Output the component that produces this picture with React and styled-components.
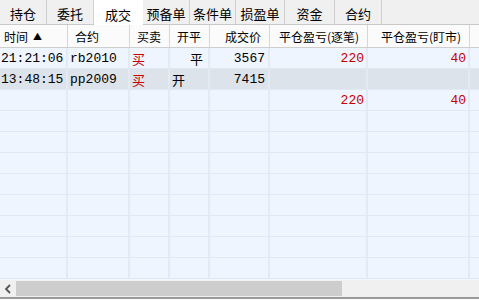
import styled, { createGlobalStyle } from 'styled-components';

const GlobalStyle = createGlobalStyle`
    html, body {
        margin: 0;
        padding: 0;
        background: #ffffff;
    }
    body {
        font-family: "Noto Sans CJK SC", "Liberation Sans", sans-serif;
    }
`

const COLS = '68px 62px 40px 40px 60px 98px 102px 60px';

const Panel = styled.div`
    width: 479px;
    height: 299px;
    overflow: hidden;
    display: flex;
    flex-direction: column;
    border-bottom: 2px solid #9a9a9a;
    box-sizing: border-box;
`

const TabBar = styled.div`
    display: flex;
    height: 25px;
    background: #f0f0f0;
    border-bottom: 1px solid #c9c9c9;
    box-sizing: border-box;
    flex-shrink: 0;
`

const Tab = styled.div`
    width: ${props => props.w}px;
    display: flex;
    align-items: center;
    justify-content: center;
    padding-top: 3px;
    box-sizing: border-box;
    font-size: 13px;
    color: #000;
    background: ${props => props.active ? '#ffffff' : 'transparent'};
    border-right: 1px solid ${props => props.active ? '#ffffff' : '#cfcfcf'};
    margin-bottom: ${props => props.active ? '-1px' : '0'};
`

const Header = styled.div`
    display: grid;
    grid-template-columns: ${COLS};
    height: 23px;
    background: #fbfbfb;
    border-bottom: 1px solid #cfcfcf;
    box-sizing: border-box;
    flex-shrink: 0;
`

const HeadCell = styled.div`
    display: flex;
    align-items: center;
    justify-content: ${props => props.right ? 'flex-end' : 'flex-start'};
    padding: ${props => props.right ? '0 8px 0 0' : `0 0 0 ${props.pad ?? 7}px`};
    font-size: 12px;
    color: #000;
    border-right: 1px solid #d6d6d6;
    white-space: nowrap;
    overflow: hidden;
`

const Arrow = styled.span`
    font-size: 9px;
    margin-left: 5px;
`

const Body = styled.div`
    flex: 1;
    background: #f0f6ff;
    overflow: hidden;
`

const Row = styled.div`
    display: grid;
    grid-template-columns: ${COLS};
    height: 21px;
    background: ${props => props.selected ? '#dde3ea' : '#eff5fe'};
    border-bottom: 1px solid #e2e8f1;
    box-sizing: border-box;
`

const Cell = styled.div`
    display: flex;
    align-items: center;
    justify-content: ${props => props.right ? 'flex-end' : 'flex-start'};
    padding: ${props => props.right ? `0 ${props.pad ?? 2}px 0 0` : `0 0 0 ${props.pad ?? 2}px`};
    font-family: "Liberation Mono", "Noto Sans CJK SC", monospace;
    font-size: 13px;
    color: ${props => props.red ? '#c40000' : '#000'};
    border-right: 2px solid #e4eaf3;
    white-space: nowrap;
    overflow: hidden;
`

const ScrollBar = styled.div`
    display: flex;
    height: 17px;
    background: #f0f0f0;
    flex-shrink: 0;
`

const ScrollButton = styled.div`
    width: 16px;
    display: flex;
    align-items: center;
    justify-content: center;
`

const Thumb = styled.div`
    width: 326px;
    margin: 1px 0;
    background: #cdcdcd;
`

const tabs = [
    { label: '持仓', w: 47 },
    { label: '委托', w: 47 },
    { label: '成交', w: 49, active: true },
    { label: '预备单', w: 47 },
    { label: '条件单', w: 46 },
    { label: '损盈单', w: 49 },
    { label: '资金', w: 50 },
    { label: '合约', w: 47 },
];

const trades = [
    { time: '21:21:06', code: 'rb2010', side: '买', oc: '平', ocPad: 20, price: '3567', pnl1: '220', pnl2: '40' },
    { time: '13:48:15', code: 'pp2009', side: '买', oc: '开', ocPad: 2, price: '7415', pnl1: '', pnl2: '', selected: true },
    { time: '', code: '', side: '', oc: '', price: '', pnl1: '220', pnl2: '40' },
];

const EMPTY_ROWS = 8;

const App = () => {
    return (
        <>
            <GlobalStyle />
            <Panel>
                <TabBar>
                    {tabs.map(t => (
                        <Tab key={t.label} w={t.w} active={t.active}>{t.label}</Tab>
                    ))}
                </TabBar>

                <Header>
                    <HeadCell pad={4}>时间<Arrow>▲</Arrow></HeadCell>
                    <HeadCell>合约</HeadCell>
                    <HeadCell>买卖</HeadCell>
                    <HeadCell>开平</HeadCell>
                    <HeadCell right>成交价</HeadCell>
                    <HeadCell right>平仓盈亏(逐笔)</HeadCell>
                    <HeadCell right>平仓盈亏(盯市)</HeadCell>
                    <HeadCell />
                </Header>

                <Body>
                    {trades.map((r, i) => (
                        <Row key={i} selected={r.selected}>
                            <Cell pad={1}>{r.time}</Cell>
                            <Cell>{r.code}</Cell>
                            <Cell red>{r.side}</Cell>
                            <Cell pad={r.ocPad}>{r.oc}</Cell>
                            <Cell right pad={3}>{r.price}</Cell>
                            <Cell right red>{r.pnl1}</Cell>
                            <Cell right red>{r.pnl2}</Cell>
                            <Cell />
                        </Row>
                    ))}
                    {Array.from({ length: EMPTY_ROWS }).map((_, i) => (
                        <Row key={'e' + i}>
                            <Cell /><Cell /><Cell /><Cell /><Cell /><Cell /><Cell /><Cell />
                        </Row>
                    ))}
                </Body>

                <ScrollBar>
                    <ScrollButton>
                        <svg width="8" height="10" viewBox="0 0 8 10">
                            <path d="M6 1 L2 5 L6 9" fill="none" stroke="#555" strokeWidth="1.8" />
                        </svg>
                    </ScrollButton>
                    <Thumb />
                </ScrollBar>
            </Panel>
        </>
    )
}

export default App;
